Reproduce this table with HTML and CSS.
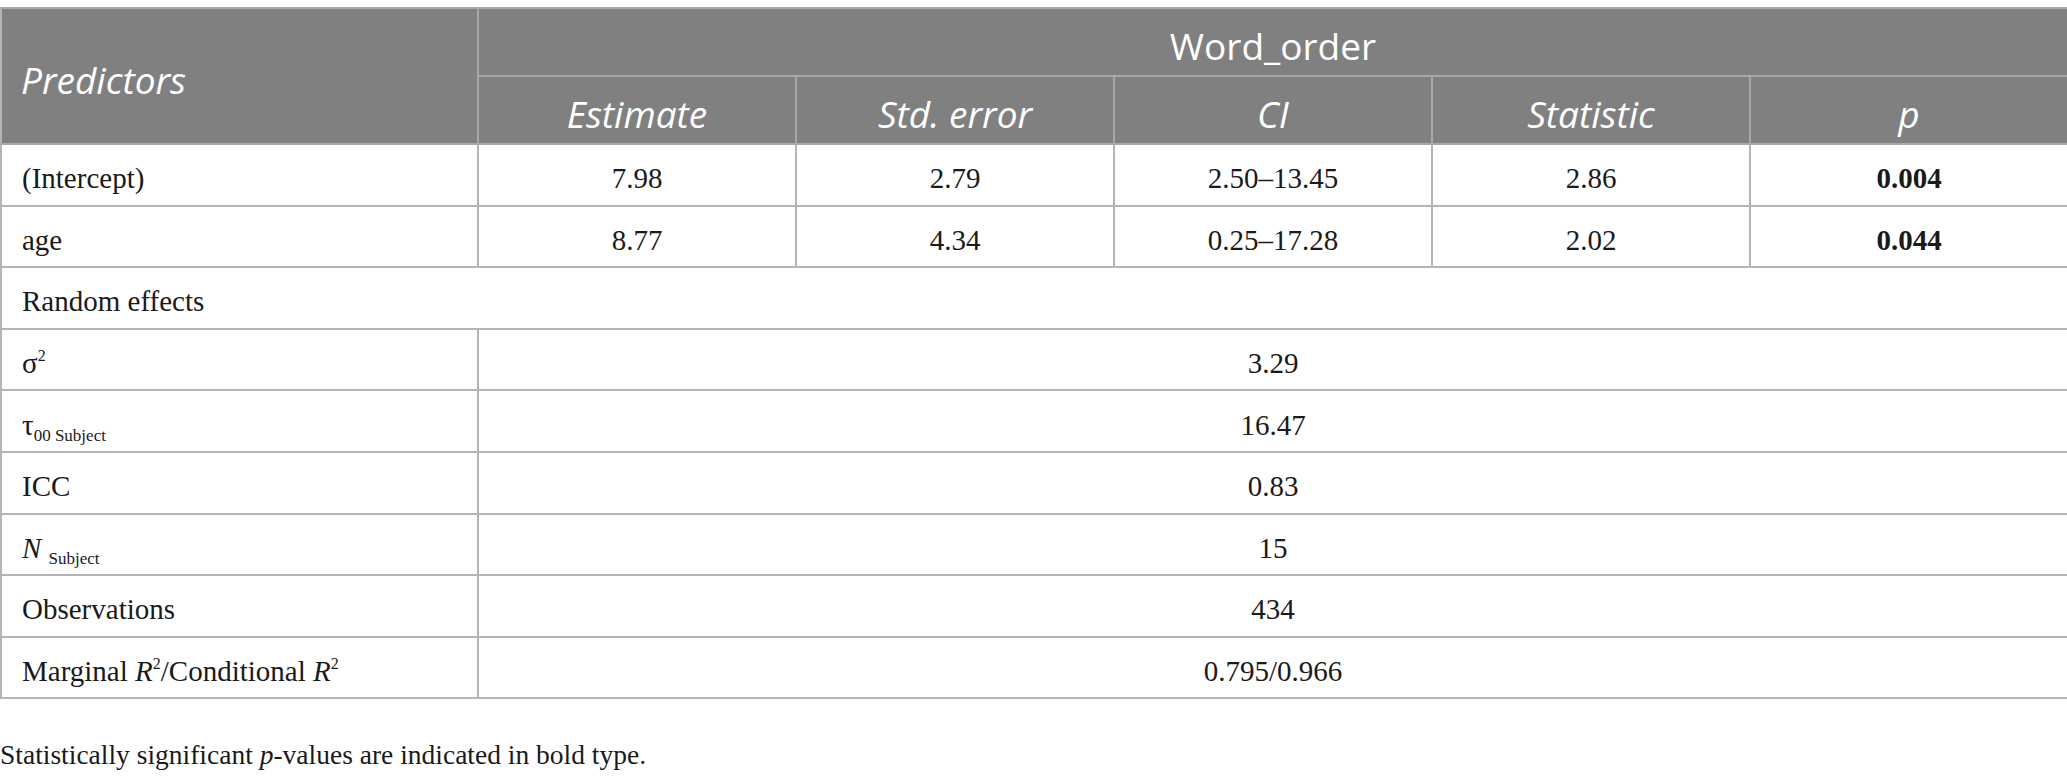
FILE: index.html
```html
<!DOCTYPE html>
<html>
<head>
<meta charset="utf-8">
<link rel="stylesheet" href="styles.css">
</head>
<body>
<table class="stats">
  <colgroup>
    <col class="c-first">
    <col class="c-num"><col class="c-num"><col class="c-num"><col class="c-num"><col class="c-num">
  </colgroup>
  <thead>
    <tr class="h1">
      <th rowspan="2" class="h-pred">Predictors</th>
      <th colspan="5" class="h-group">Word_order</th>
    </tr>
    <tr class="h2">
      <th>Estimate</th>
      <th>Std. error</th>
      <th>CI</th>
      <th>Statistic</th>
      <th>p</th>
    </tr>
  </thead>
  <tbody>
    <tr>
      <td class="lbl">(Intercept)</td>
      <td>7.98</td><td>2.79</td><td>2.50–13.45</td><td>2.86</td><td class="sig">0.004</td>
    </tr>
    <tr>
      <td class="lbl">age</td>
      <td>8.77</td><td>4.34</td><td>0.25–17.28</td><td>2.02</td><td class="sig">0.044</td>
    </tr>
    <tr>
      <td class="lbl" colspan="6">Random effects</td>
    </tr>
    <tr>
      <td class="lbl">σ<sup>2</sup></td>
      <td colspan="5">3.29</td>
    </tr>
    <tr>
      <td class="lbl">τ<sub>00 Subject</sub></td>
      <td colspan="5">16.47</td>
    </tr>
    <tr>
      <td class="lbl">ICC</td>
      <td colspan="5">0.83</td>
    </tr>
    <tr>
      <td class="lbl"><i>N</i> <sub>Subject</sub></td>
      <td colspan="5">15</td>
    </tr>
    <tr>
      <td class="lbl">Observations</td>
      <td colspan="5">434</td>
    </tr>
    <tr>
      <td class="lbl">Marginal <i>R</i><sup>2</sup>/Conditional <i>R</i><sup>2</sup></td>
      <td colspan="5">0.795/0.966</td>
    </tr>
  </tbody>
</table>
<p class="note">Statistically significant <i>p</i>-values are indicated in bold type.</p>
</body>
</html>
```
FILE: styles.css
```css
html, body {
  margin: 0;
  padding: 0;
  background: #ffffff;
}
body {
  padding-top: 7px;
  font-family: "Liberation Serif", "Times New Roman", serif;
  color: #1a1a1a;
}
.stats {
  width: 2067px;
  border-collapse: collapse;
  table-layout: fixed;
}
.c-first { width: 477px; }
.c-num { width: 318px; }
.stats th, .stats td {
  border: 2px solid #b4b4b4;
  padding: 0;
}
.stats thead th {
  background: #7f807f;
  color: #ffffff;
  font-family: "Open Sans", "Noto Sans", sans-serif;
  font-style: italic;
  font-weight: 400;
  font-size: 37px;
  line-height: 1;
  text-align: center;
  border-color: #a8a8a8;
  padding-top: 6px;
}
.stats thead tr { height: 68px; }
.stats thead .h-pred {
  text-align: left;
  padding-left: 19px;
  border-left-color: #b4b4b4;
}
.stats thead .h-group {
  font-style: normal;
}
.stats tbody tr { height: 61.6px; }
.stats tbody td {
  font-size: 29px;
  text-align: center;
  line-height: 1;
  padding-top: 8px;
}
.stats tbody td.lbl {
  text-align: left;
  padding-left: 20px;
}
.stats td.sig { font-weight: bold; }
.stats sup {
  font-size: 16px;
  vertical-align: 12px;
  line-height: 0;
}
.stats sub {
  font-size: 17px;
  vertical-align: -6px;
  line-height: 0;
}
.note {
  margin: 40px 0 0 0;
  font-size: 27.5px;
  color: #1a1a1a;
}
```
